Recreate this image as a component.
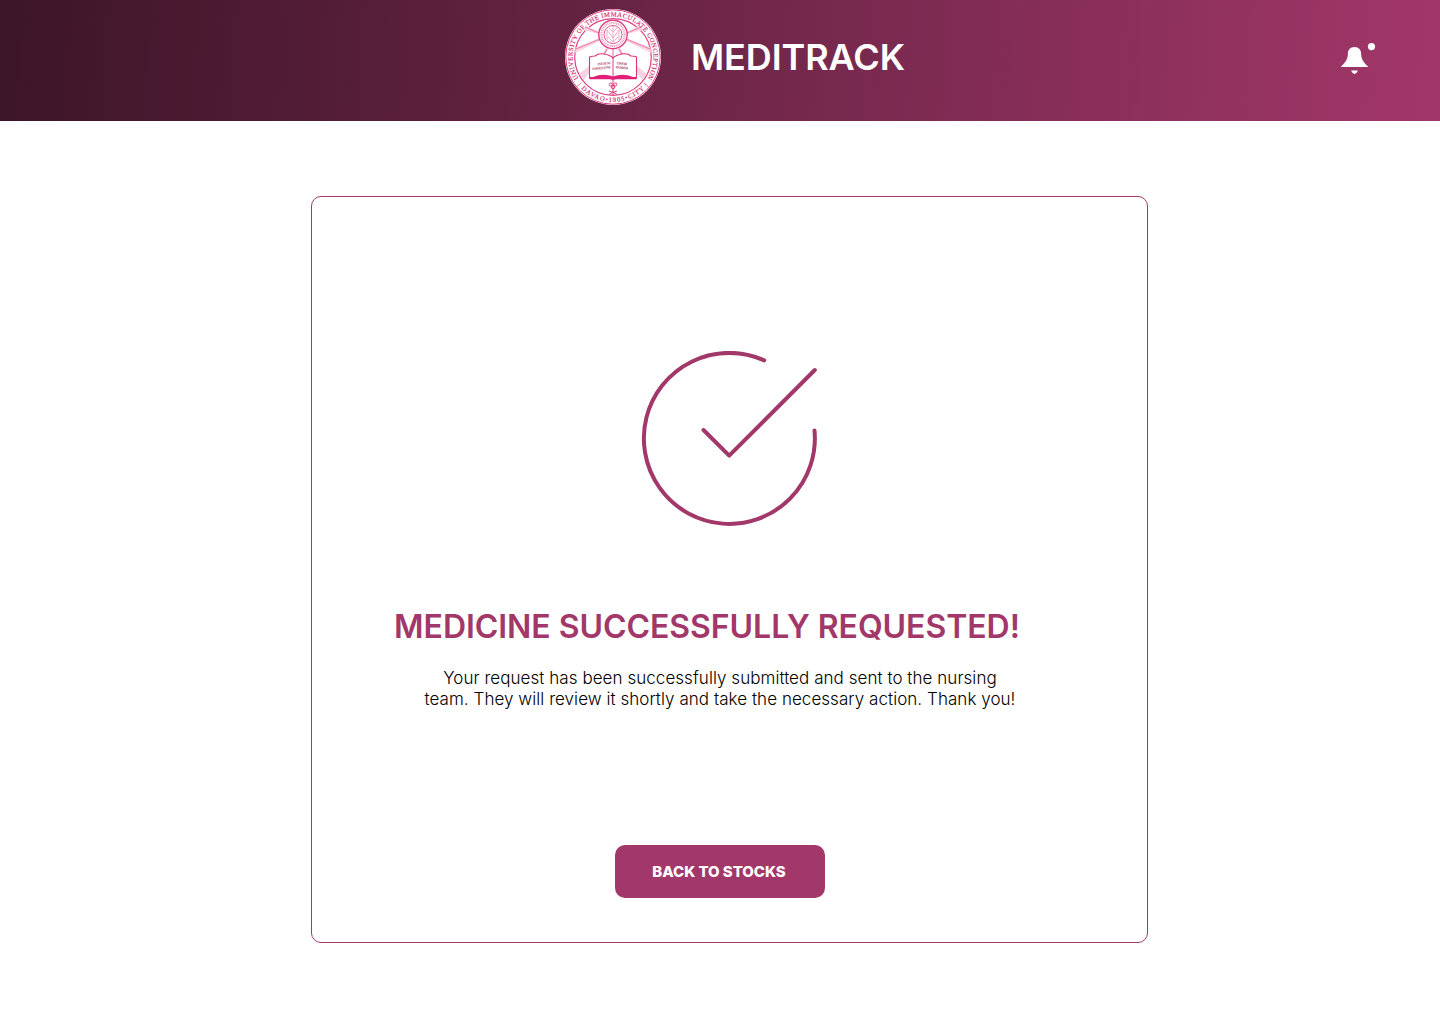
<div class="page">
  <header>
    <div class="brand">
      <svg class="seal" viewBox="-49 -49 98 98" aria-label="University seal">
        <defs>
          <path id="arc-top" d="M-34.4 21.3A40.5 40.5 0 1 1 34.4 21.3" />
          <path id="arc-bottom" d="M-35.2 28A45 45 0 0 0 35.2 28" />
        </defs>
        <circle r="48" fill="#fff" />
        <circle r="47.2" fill="none" stroke="#df3f83" stroke-width="1" />
        <circle r="38.3" fill="none" stroke="#df3f83" stroke-width="1.2" />
        <g class="rays">
          <path d="M-14-25-27-31.5-30-27-14-23ZM-13-19-37.5-9.5-38-4-13-16ZM-7-9-12-1-8-1-5-8ZM-24 9-34 17-29 23-24 16Z" />
          <path d="M14-25 27-31.5 30-27 14-23ZM13-19 37.5-9.5 38-4 13-16ZM7-9 12-1 8-1 5-8ZM24 9 34 17 29 23 24 16Z" />
          <path class="core" d="M-14-24-28-30M-13-18-37-8M-6-8-10-1M14-24 28-30M13-18 37-8M6-8 10-1M0-9V0" />
        </g>
        <g fill="none" stroke="#df3f83">
          <circle cy="-22.5" r="14.2" fill="#fff" stroke-width="1.4" />
          <circle cy="-22.5" r="11.6" stroke-width="2.2" stroke-dasharray="1 .8" stroke="#eda0c0" />
          <circle cy="-22.5" r="9" stroke-width=".9" />
          <path d="M-6-17V-27L0-19 6-27V-17M-4-29 0-25 4-29M-5-20 0-15 5-20M0-31V-15" stroke="#eda0c0" stroke-width=".9" />
        </g>
        <path d="M-23.5 0Q-21-1-18-1-15-4-9-3-3-2 0 1 3-2 9-3 15-4 18-1 21-1 23.5 0V21H-23.5Z" fill="#fff" stroke="#df2f7a" stroke-width="1.1" />
        <path d="M-23.5 20H-20Q-10 16 0 19.5 10 16 20 20H23.5V22.3H3L0 23-3 22.3H-23.5Z" fill="#e21f78" />
        <path d="M0 .5V20" stroke="#df3f83" stroke-width="1" />
        <g class="book" transform="rotate(-6)">
          <text x="-9.5" y="6.8" textLength="13">INITIUM</text>
          <text x="-12.4" y="10.9" textLength="19">SAPIENTIAE</text>
        </g>
        <g class="book" transform="rotate(6)">
          <text x="9.5" y="6.8" textLength="11">TIMOR</text>
          <text x="10" y="10.9" textLength="12">DOMINI</text>
        </g>
        <g fill="none" stroke="#df3f83" stroke-width="1">
          <circle cx="-2.3" cy="27.5" r="1.5" /><circle cx="2.3" cy="27.5" r="1.5" />
          <circle cy="30" r="1.8" /><path d="M0 23V38M-4 34 0 35.5 4 34M-4 37.5 0 35 4 37.5" />
        </g>
        <text class="ring"><textPath href="#arc-top" textLength="172">UNIVERSITY OF THE IMMACULATE CONCEPTION</textPath></text>
        <text class="ring"><textPath href="#arc-bottom" textLength="80">| DAVAO•1905•CITY |</textPath></text>
      </svg>
      <h1>MEDITRACK</h1>
    </div>
    <svg class="bell" viewBox="0 0 36 33" aria-label="Notifications">
      <path d="M14.5 4C10 4 7.9 7 7.9 10.5 7.9 16 5.5 19.5 1 23.4V24H28V23.4C23.5 19.5 21.1 16 21.1 10.5 21.1 7 19 4 14.5 4ZM11 27.5H18Q16.4 31 14.5 31T11 27.5Z" />
      <circle cx="31.5" cy="3.6" r="3.6" />
    </svg>
  </header>
  <main>
    <svg class="check" viewBox="0 0 176 176">
      <path d="M123.2 9.3A85.5 85.5 0 1 0 173.5 79.5M62.5 79 88.2 104.6 173.8 19" />
    </svg>
    <h2>MEDICINE SUCCESSFULLY REQUESTED!</h2>
    <p>Your request has been successfully submitted and sent to the nursing<br />team. They will review it shortly and take the necessary action. Thank you!</p>
    <button>BACK TO STOCKS</button>
  </main>
</div>

<style>
  :global(body) { background: #fff; }
  .page { width: 1440px; height: 1024px; overflow: hidden; font-family: Inter, sans-serif; }
  header {
    height: 121px;
    box-sizing: border-box;
    padding: 0 64px 0 564px;
    display: flex;
    justify-content: space-between;
    background: linear-gradient(94deg, #3c1528, #a23769);
  }
  .brand { display: flex; padding-top: 8px; gap: 29px; }
  .seal { width: 98px; height: 98px; }
  .rays { fill: #f8d3e2; }
  .core { fill: none; stroke: #ec86b1; stroke-width: 1.2; }
  .ring { font: 400 6.6px "Liberation Serif", serif; fill: #d02e6e; stroke: #d02e6e; stroke-width: 0.15; }
  .book text { font: 700 3.6px "Liberation Serif", serif; fill: #b0446f; text-anchor: middle; }
  h1 { margin: 27px 0 0; font-size: 36px; line-height: 44px; font-weight: 600; letter-spacing: -0.1px; color: #fff; }
  .bell { width: 36px; height: 33px; margin-top: 43px; fill: #fff; }
  main {
    box-sizing: border-box;
    width: 837px;
    height: 747px;
    margin: 75px 0 0 311px;
    padding: 154px 19px 0 0;
    border: 1px solid #a23769;
    border-radius: 10px;
    display: flex;
    flex-direction: column;
    align-items: center;
  }
  .check { width: 176px; height: 176px; margin-left: 18px; fill: none; stroke: #a23769; stroke-width: 4; stroke-linecap: round; stroke-linejoin: round; }
  h2 { margin: 80px 26px 0 0; font-size: 32px; line-height: 40px; font-weight: 600; letter-spacing: -0.05px; color: #a23769; white-space: nowrap; }
  p { margin: 21px 0 0; font-size: 17px; line-height: 21px; font-weight: 300; letter-spacing: 0.05px; color: #000; text-align: center; white-space: nowrap; }
  button { margin-top: 135px; width: 210px; height: 53px; border: 0; border-radius: 10px; padding: 0 2px 0 0; background: #a23769; color: #fff; font: 800 15px Inter, sans-serif; letter-spacing: -0.05px; }
</style>
